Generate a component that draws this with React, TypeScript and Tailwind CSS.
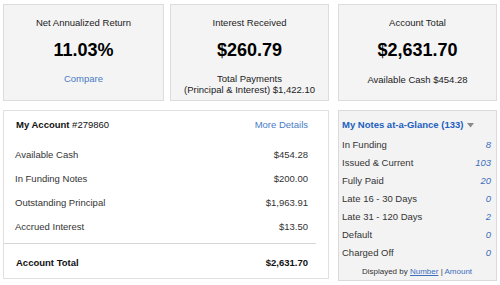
import React from "react";

const font = { fontFamily: '"Liberation Sans", Arial, sans-serif' };

function Card({ w, children }: { w: string; children: React.ReactNode }) {
  return (
    <div
      className={`${w} h-[97px] box-border border border-[#dcdcdc] bg-[#f4f4f4] flex flex-col items-center pt-[12px] text-[#222]`}
    >
      {children}
    </div>
  );
}

const accountRows: [string, string][] = [
  ["Available Cash", "$454.28"],
  ["In Funding Notes", "$200.00"],
  ["Outstanding Principal", "$1,963.91"],
  ["Accrued Interest", "$13.50"],
];

const notes: [string, string][] = [
  ["In Funding", "8"],
  ["Issued & Current", "103"],
  ["Fully Paid", "20"],
  ["Late 16 - 30 Days", "0"],
  ["Late 31 - 120 Days", "2"],
  ["Default", "0"],
  ["Charged Off", "0"],
];

export default function App() {
  return (
    <div className="w-[500px] h-[285px] bg-white overflow-hidden" style={font}>
      <div className="flex pl-[3px] pt-[4px]">
        <Card w="w-[161px]">
          <div className="text-[9.5px] leading-[12px]">Net Annualized Return</div>
          <div className="mt-[10px] text-[18px] leading-[22px] font-bold text-black">11.03%</div>
          <div className="mt-[12px] text-[9.5px] leading-[12px] text-[#4a7cc4]">Compare</div>
        </Card>
        <div className="w-[6px]" />
        <Card w="w-[159px]">
          <div className="text-[9.5px] leading-[12px]">Interest Received</div>
          <div className="mt-[10px] text-[18px] leading-[22px] font-bold text-black">$260.79</div>
          <div className="mt-[12px] text-[9.5px] leading-[11px] text-center">
            Total Payments
            <br />
            (Principal &amp; Interest) $1,422.10
          </div>
        </Card>
        <div className="w-[9px]" />
        <Card w="w-[159px]">
          <div className="text-[9.5px] leading-[12px]">Account Total</div>
          <div className="mt-[10px] text-[18px] leading-[22px] font-bold text-black">$2,631.70</div>
          <div className="mt-[13px] text-[9.5px] leading-[12px]">Available Cash $454.28</div>
        </Card>
      </div>

      <div className="flex pl-[3px] mt-[9px]">
        <div className="w-[326px] h-[169px] box-border border border-[#e0e0e0] bg-white pt-[8px] text-[#333]">
          <div className="flex justify-between pl-[12px] pr-[20px] text-[9.5px] leading-[12px]">
            <div className="text-[#111]">
              <span className="font-bold">My Account</span> #279860
            </div>
            <div className="text-[#4a7cc4]">More Details</div>
          </div>
          <div className="mt-[12px]">
            {accountRows.map(([l, v]) => (
              <div key={l} className="flex justify-between pl-[11px] pr-[20px] text-[9.5px] leading-[24px]">
                <span>{l}</span>
                <span>{v}</span>
              </div>
            ))}
          </div>
          <div className="mt-[4px] mr-[12px] h-px bg-[#d6d6d6]" />
          <div className="mt-[13px] flex justify-between pl-[12px] pr-[20px] text-[9.5px] leading-[12px] font-bold text-[#111]">
            <span>Account Total</span>
            <span>$2,631.70</span>
          </div>
        </div>
        <div className="w-[9px]" />
        <div className="w-[159px] h-[171px] box-border border border-[#dadada] bg-[#f3f3f3] pt-[8px] pl-[3px] pr-[4px]">
          <div className="flex items-center text-[9.5px] leading-[12px] font-bold text-[#2160c0]">
            <span>My Notes at-a-Glance (133)</span>
            <svg width="7" height="5" viewBox="0 0 7 5" className="ml-[4px]">
              <path d="M0 0 L7 0 L3.5 4.5 Z" fill="#8a8a8a" />
            </svg>
          </div>
          <div className="mt-[5px]">
            {notes.map(([l, v]) => (
              <div key={l} className="flex justify-between text-[9.5px] leading-[18px] text-[#333]">
                <span>{l}</span>
                <span className="italic text-[#3d6fbc] pr-[1px]">{v}</span>
              </div>
            ))}
          </div>
          <div className="mt-[4px] text-center text-[8px] leading-[11px] text-[#333]">
            Displayed by <span className="underline text-[#3d6fbc]">Number</span> |{" "}
            <span className="text-[#3d6fbc]">Amount</span>
          </div>
        </div>
      </div>
    </div>
  );
}
